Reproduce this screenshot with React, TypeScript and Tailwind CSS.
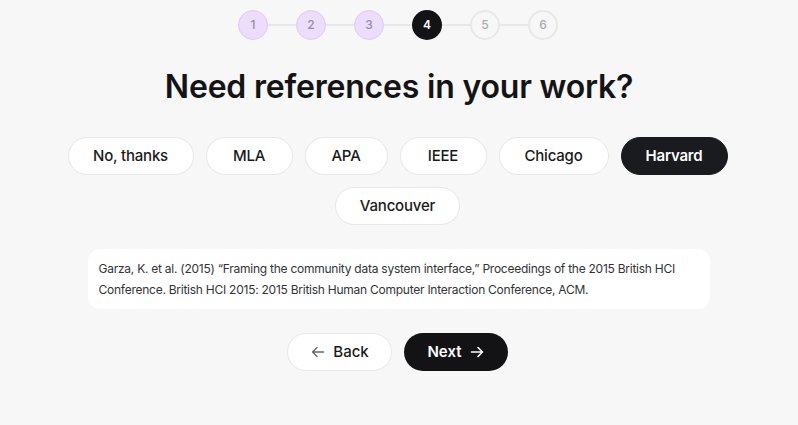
import React from "react";

const steps = [1, 2, 3, 4, 5, 6];
const options: { label: string; w: string }[] = [
  { label: "No, thanks", w: "w-[126px]" },
  { label: "MLA", w: "w-[87px]" },
  { label: "APA", w: "w-[83px]" },
  { label: "IEEE", w: "w-[87px]" },
  { label: "Chicago", w: "w-[110px]" },
  { label: "Harvard", w: "w-[107px]" },
  { label: "Vancouver", w: "w-[125px]" },
];

export default function App() {
  return (
    <div
      className="min-h-screen bg-[#f7f7f7] flex flex-col items-center pt-[10px]"
      style={{ fontFamily: "Inter, 'Noto Sans', sans-serif" }}
    >
      <div className="flex items-center mr-[2px]">
        {steps.map((s, i) => (
          <React.Fragment key={s}>
            {i > 0 && <div className="w-[28px] h-[2px] bg-[#e8e8e8]" />}
            {s < 4 ? (
              <div className="w-[30px] h-[30px] rounded-full bg-[#ecdcfd] border border-[#dfc9f6] flex items-center justify-center text-[12px] font-medium text-[#9a8da8]">
                {s}
              </div>
            ) : s === 4 ? (
              <div className="w-[30px] h-[30px] rounded-full bg-[#131316] flex items-center justify-center text-[12px] font-semibold text-white">
                {s}
              </div>
            ) : (
              <div className="w-[30px] h-[30px] rounded-full bg-[#f7f7f7] border-2 border-[#e8e8e8] flex items-center justify-center text-[12px] font-medium text-[#ababab]">
                {s}
              </div>
            )}
          </React.Fragment>
        ))}
      </div>

      <h1 className="mt-[27px] text-[32px] leading-[40px] font-semibold text-[#141416] tracking-[-0.2px]">
        Need references in your work?
      </h1>

      <div className="mt-[30px] w-[672px] mr-[3px] flex flex-wrap justify-center gap-3">
        {options.map((o) =>
          o.label === "Harvard" ? (
            <button
              key={o.label}
              className={`${o.w} h-[38px] rounded-full bg-[#1a1b1f] border border-[#1a1b1f] text-white text-[15px] font-semibold tracking-[-0.2px]`}
            >
              {o.label}
            </button>
          ) : (
            <button
              key={o.label}
              className={`${o.w} h-[38px] rounded-full bg-white border border-[#e8e8e8] text-[#1a1a1a] text-[15px] font-medium tracking-[-0.2px]`}
            >
              {o.label}
            </button>
          )
        )}
      </div>

      <div className="mt-[24px] w-[622px] mr-[1px] rounded-[12px] bg-white px-[11px] py-[9px] text-[12px] leading-[21px] tracking-[-0.25px] text-[#333336] whitespace-nowrap">
        Garza, K. et al. (2015) “Framing the community data system interface,” Proceedings of the 2015 British HCI
        <br />
        Conference. British HCI 2015: 2015 British Human Computer Interaction Conference, ACM.
      </div>

      <div className="mt-[24px] flex gap-3 mr-[3px]">
        <button className="h-[38px] w-[105px] rounded-full bg-white border border-[#e8e8e8] flex items-center justify-center gap-[7px] text-[15px] font-medium text-[#1a1a1a]">
          <svg width="16" height="16" viewBox="0 0 16 16" fill="none" stroke="#666" strokeWidth="1.4" strokeLinecap="round" strokeLinejoin="round">
            <path d="M13.5 8H2.5M7 3.5L2.5 8L7 12.5" />
          </svg>
          Back
        </button>
        <button className="h-[38px] w-[104px] rounded-full bg-[#131316] flex items-center justify-center gap-[7px] text-[15px] font-semibold text-white">
          Next
          <svg width="16" height="16" viewBox="0 0 16 16" fill="none" stroke="#fff" strokeWidth="1.6" strokeLinecap="round" strokeLinejoin="round">
            <path d="M2.5 8H13.5M9 3.5L13.5 8L9 12.5" />
          </svg>
        </button>
      </div>
    </div>
  );
}
